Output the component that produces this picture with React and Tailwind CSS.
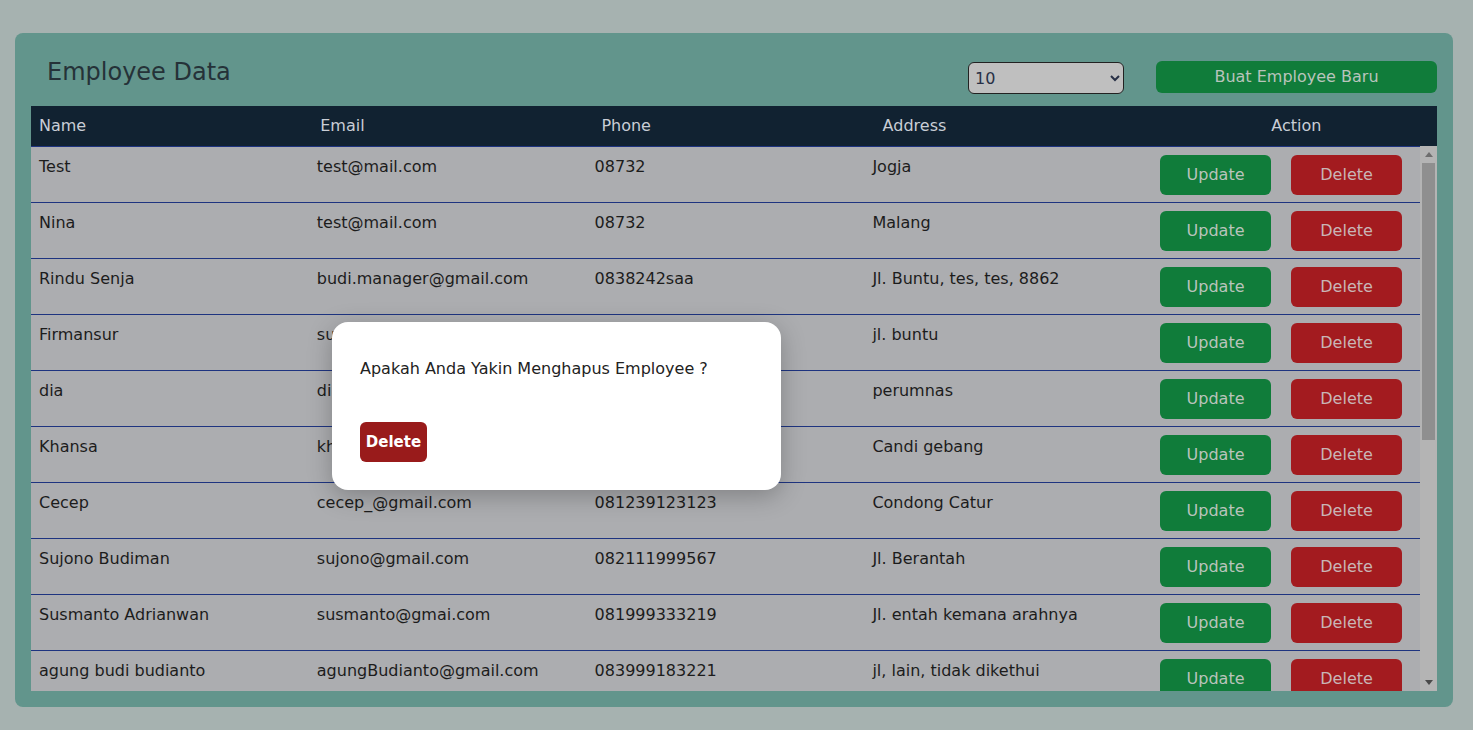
import React from 'react';

const employees = [
  { name: 'Test', email: 'test@mail.com', phone: '08732', address: 'Jogja' },
  { name: 'Nina', email: 'test@mail.com', phone: '08732', address: 'Malang' },
  { name: 'Rindu Senja', email: 'budi.manager@gmail.com', phone: '0838242saa', address: 'Jl. Buntu, tes, tes, 8862' },
  { name: 'Firmansur', email: 'sumansur@gmail.com', phone: '08123456789', address: 'jl. buntu' },
  { name: 'dia', email: 'dia@gmail.com', phone: '0812345678', address: 'perumnas' },
  { name: 'Khansa', email: 'khansa@gmail.com', phone: '08561234567', address: 'Candi gebang' },
  { name: 'Cecep', email: 'cecep_@gmail.com', phone: '081239123123', address: 'Condong Catur' },
  { name: 'Sujono Budiman', email: 'sujono@gmail.com', phone: '082111999567', address: 'Jl. Berantah' },
  { name: 'Susmanto Adrianwan', email: 'susmanto@gmai.com', phone: '081999333219', address: 'Jl. entah kemana arahnya' },
  { name: 'agung budi budianto', email: 'agungBudianto@gmail.com', phone: '083999183221', address: 'jl, lain, tidak dikethui' },
];

function Scrollbar() {
  return (
    <div className="w-[17px] shrink-0 bg-[#b4b4b4] flex flex-col items-center">
      <div className="h-[17px] w-full flex items-center justify-center">
        <svg width="8" height="5" viewBox="0 0 8 5"><path d="M0 5 L4 0 L8 5 Z" fill="#6e6e6e" /></svg>
      </div>
      <div className="w-[13px] h-[277px] bg-[#8f8f8f]" />
      <div className="flex-1" />
      <div className="h-[17px] w-full flex items-center justify-center">
        <svg width="8" height="5" viewBox="0 0 8 5"><path d="M0 0 L8 0 L4 5 Z" fill="#4a4a4a" /></svg>
      </div>
    </div>
  );
}

function Row({ emp }) {
  return (
    <div className="grid grid-cols-5 border-t border-[#1e3480] text-[#1c1c1c]">
      <div className="px-2 pt-2 leading-6 whitespace-nowrap">{emp.name}</div>
      <div className="px-2 pt-2 leading-6 whitespace-nowrap">{emp.email}</div>
      <div className="px-2 pt-2 leading-6 whitespace-nowrap">{emp.phone}</div>
      <div className="px-2 pt-2 leading-6 whitespace-nowrap">{emp.address}</div>
      <div className="flex justify-center gap-5 pt-2 pb-[7px]">
        <button className="w-[111px] h-10 rounded-md bg-[#107c3a] text-[#b9c4bc]">Update</button>
        <button className="w-[111px] h-10 rounded-md bg-[#a31b1f] text-[#c9b5b6]">Delete</button>
      </div>
    </div>
  );
}

export default function App() {
  return (
    <div
      className="relative min-h-[730px] bg-[#a6b2b0] pl-[15px] pr-[20px] pt-[33px] pb-[23px]"
      style={{ fontFamily: '"DejaVu Sans", sans-serif' }}
    >
      <div className="rounded-lg bg-[#62958c] p-4">
        <div className="flex items-start h-[57px] pt-[12px]">
          <h1 className="flex-1 pl-4 text-2xl leading-8 -mt-[5px] text-[#253238]">Employee Data</h1>
          <select className="mt-[1px] w-[156px] h-[32px] rounded-md border border-[#222] bg-[#bfbfbf] text-[#283046] pl-[2px]">
            <option>10</option>
          </select>
          <button className="ml-8 w-[281px] h-[32px] rounded-md bg-[#107c3a] text-[#b9c4bc]">
            Buat Employee Baru
          </button>
        </div>

        <div className="grid grid-cols-5 h-10 items-center bg-[#112231] text-[#c9ced6]">
          <div className="px-2">Name</div>
          <div className="px-2">Email</div>
          <div className="px-2">Phone</div>
          <div className="px-2">Address</div>
          <div className="text-center">Action</div>
        </div>

        <div className="flex h-[545px] bg-[#acadb0]">
          <div className="flex-1 overflow-hidden">
            {employees.map((emp, i) => (
              <Row key={i} emp={emp} />
            ))}
          </div>
          <Scrollbar />
        </div>
      </div>

      <div className="absolute left-[332px] top-[322px] w-[449px] h-[168px] rounded-2xl bg-white px-7 pt-[35px] shadow-[0_6px_24px_rgba(0,0,0,0.25)]">
        <p className="text-base leading-6 text-[#222]">Apakah Anda Yakin Menghapus Employee ?</p>
        <button className="mt-[41px] h-10 w-[67px] rounded-md bg-[#991b1b] text-white text-[15px] font-bold">Delete</button>
      </div>
    </div>
  );
}
